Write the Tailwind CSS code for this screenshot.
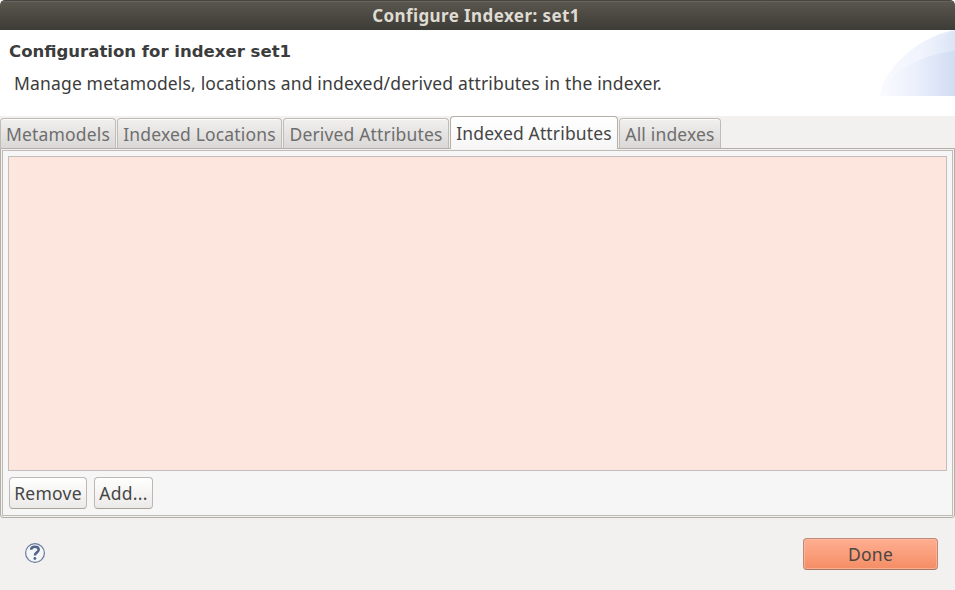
<!DOCTYPE html>
<html lang="en">
<head>
<meta charset="utf-8">
<title>Configure Indexer: set1</title>
<script src="https://cdn.jsdelivr.net/npm/@tailwindcss/browser@4"></script>
</head>
<body class="w-[955px] h-[590px] overflow-hidden bg-white font-['Noto_Sans',sans-serif] text-[17.5px] text-[#3c3c3c]">
<div class="flex flex-col w-[955px] h-[590px] bg-[#f2f1f0] rounded-t-[5px] overflow-hidden whitespace-nowrap tracking-[0.16px]">
  <header class="h-[30px] shrink-0 flex items-center justify-center bg-linear-to-b from-[#5a574e] to-[#3e3c37] border-t border-[#47453f] shadow-[inset_0_1px_0_#67645b]">
    <h1 class="pt-px pr-[3px] text-[17px] leading-[28px] font-bold tracking-[0.41px] text-[#dfdbd2]">Configure Indexer: set1</h1>
  </header>
  <section class="h-[86px] shrink-0 flex justify-between bg-white">
    <div class="pl-[9px] pt-[11px]">
      <h2 class="font-['DejaVu_Sans',sans-serif] font-bold text-[16.55px] leading-[21px] tracking-normal">Configuration for indexer set1</h2>
      <p class="pl-[5px] mt-[9px] leading-6">Manage metamodels, locations and indexed/derived attributes in the indexer.</p>
    </div>
    <svg class="w-[75px] h-[66px]" viewBox="0 0 75 66">
      <defs>
        <linearGradient id="a"><stop offset="0" stop-color="#f9faff"/><stop offset=".55" stop-color="#f1f4fd"/><stop offset="1" stop-color="#e0e7f7"/></linearGradient>
        <linearGradient id="b"><stop offset="0" stop-color="#fafbff"/><stop offset=".5" stop-color="#eaeffb"/><stop offset="1" stop-color="#d1dcf3"/></linearGradient>
        <linearGradient id="c"><stop offset="0" stop-color="#eff3fc"/><stop offset="1" stop-color="#dbe4f6"/></linearGradient>
      </defs>
      <path d="M0 66C2 42 35 7 75 0V66Z" fill="url(#a)"/>
      <path d="M45 29Q55 9 75 1V22Q60 24 45 29Z" fill="url(#c)"/>
      <path d="M0 66Q4 56 10 50C28 32 52 23 75 21V66Z" fill="url(#b)"/>
    </svg>
  </section>
  <nav class="h-[33px] shrink-0 flex items-end gap-px relative z-10 -mb-px text-[#6e6e6e]">
    <div class="w-[116px] h-[30px] mb-px pt-px flex items-center justify-center rounded-t-[4px] border border-b-0 border-[#bfbbb5] bg-linear-to-b from-[#f1f0ef] to-[#dad8d6] shadow-[inset_0_1px_0_#fafafa]">Metamodels</div>
    <div class="w-[165px] h-[30px] mb-px pt-px flex items-center justify-center rounded-t-[4px] border border-b-0 border-[#bfbbb5] bg-linear-to-b from-[#f1f0ef] to-[#dad8d6] shadow-[inset_0_1px_0_#fafafa]">Indexed Locations</div>
    <div class="w-[166px] h-[30px] mb-px pt-px flex items-center justify-center rounded-t-[4px] border border-b-0 border-[#bfbbb5] bg-linear-to-b from-[#f1f0ef] to-[#dad8d6] shadow-[inset_0_1px_0_#fafafa]">Derived Attributes</div>
    <div class="w-[168px] h-[33px] flex items-center justify-center rounded-t-[4px] border border-b-0 border-[#b3afa8] bg-linear-to-b from-white to-[#f6f6f6] text-[#464646]">Indexed Attributes</div>
    <div class="w-[102px] h-[30px] mb-px pt-px flex items-center justify-center rounded-t-[4px] border border-b-0 border-[#bfbbb5] bg-linear-to-b from-[#f1f0ef] to-[#dad8d6] shadow-[inset_0_1px_0_#fafafa]">All indexes</div>
  </nav>
  <main class="h-[370px] shrink-0 border border-[#b3afa8] rounded-b-[3px] bg-[#f2f1f0] p-px">
    <div class="h-full border border-[#bfbcb6] bg-[#f6f6f6] px-[5px] pt-[5px]">
      <div class="h-[315px] border border-[#c3bebc] bg-[#fde6de]"></div>
      <div class="flex gap-[7px] pt-[6px] pl-px text-[#464646]">
        <button class="w-[78px] h-[32px] tracking-[0.25px] flex items-center justify-center rounded-[4px] border border-[#bdb8b2] border-b-[#a9a298] bg-linear-to-b from-white to-[#eceae8]">Remove</button>
        <button class="w-[59px] h-[32px] tracking-[0.25px] flex items-center justify-center rounded-[4px] border border-[#bdb8b2] border-b-[#a9a298] bg-linear-to-b from-white to-[#eceae8]">Add...</button>
      </div>
    </div>
  </main>
  <footer class="flex-1 flex justify-between pl-[24px] pr-[17px] pt-[20px]">
    <svg class="w-[22px] h-[22px] mt-[4px]" viewBox="0 0 22 22" fill="none">
      <circle cx="11" cy="11" r="9.4" fill="#f4f5f7" stroke="#6a7b9c" stroke-width="1.2"/>
      <path d="M7.1 7.7C7.3 3.7 14.7 3.7 14.7 7.8C14.7 10.5 10.9 10.3 10.9 13.6" stroke="#50648a" stroke-width="2.5"/>
      <circle cx="10.9" cy="16.5" r="1.4" fill="#50648a"/>
    </svg>
    <button class="w-[135px] h-[32px] tracking-[0.25px] flex items-center justify-center rounded-[4px] border border-[#bd8a75] border-b-[#a87764] bg-linear-to-b from-[#ffae91] to-[#f48d65] shadow-[inset_0_0_0_1px_#ffbda5aa] text-[#4c4643]">Done</button>
  </footer>
</div>
</body>
</html>
